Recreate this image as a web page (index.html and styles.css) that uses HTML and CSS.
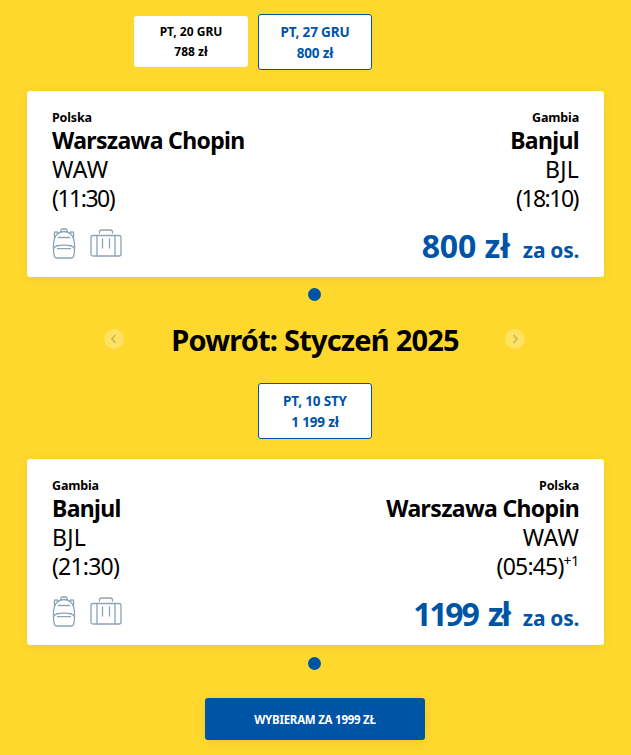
FILE: index.html
```html
<!DOCTYPE html>
<html lang="pl">

<head>
    <meta charset="utf-8">
    <title>Wybór lotu</title>
    <link rel="stylesheet" href="styles.css">
</head>

<body>
    <svg class="sprite" aria-hidden="true">
        <symbol id="backpack" viewBox="0 0 24 31">
            <path d="M9 3.500V2.400Q9 1 10.500 1h3Q15 1 15 2.400v1.100M5 6.200C7 4.300 9 3.500 12 3.500s5 .8 7 2.700c2 2 3.300 6 3.500 10.500.2 4.500-.1 8.500-.8 11.300Q21.200 30 19.500 30h-15Q2.800 30 2.300 28C1.600 25.200 1.300 21.200 1.500 16.700 1.700 12.200 3 8.200 5 6.200z" />
            <path d="M2.400 10V5Q2.400 4 3.500 4h1Q5.700 4 6.200 5M21.600 10V5Q21.600 4 20.500 4h-1Q18.300 4 17.800 5M6.500 9.500h11M1.500 20.500C3 17.500 6 17.200 12 17.200s9 .3 10.500 3.300M5.500 20.700h13" />
        </symbol>
        <symbol id="suitcase" viewBox="0 0 32 28">
            <rect x="1" y="6.500" width="30" height="20.500" rx="2" />
            <path d="M9.500 4V3Q9.500 1 11.500 1h9Q22.500 1 22.500 3v1M7 6.500V27M25 6.500V27M12.500 10v9M19.500 10v9" />
        </symbol>
    </svg>

    <div class="dates">
        <button class="date">
            <span class="day">PT, 20 GRU</span>
            <span class="amount">788 zł</span>
        </button>
        <button class="date active">
            <span class="day">PT, 27 GRU</span>
            <span class="amount">800 zł</span>
        </button>
    </div>

    <div class="flight">
        <div class="route">
            <div class="airport">
                <div class="country">Polska</div>
                <div class="city">Warszawa Chopin</div>
                <div class="code">WAW</div>
                <div class="time tight">(11:30)</div>
            </div>
            <div class="airport arrival">
                <div class="country">Gambia</div>
                <div class="city">Banjul</div>
                <div class="code">BJL</div>
                <div class="time tight">(18:10)</div>
            </div>
        </div>
        <div class="summary">
            <div class="luggage">
                <svg class="backpack"><use href="#backpack" /></svg>
                <svg class="suitcase"><use href="#suitcase" /></svg>
            </div>
            <div class="price">
                <span class="value">800 zł</span>
                <span class="person">za os.</span>
            </div>
        </div>
    </div>
    <div class="dot"></div>

    <div class="month">
        <button class="arrow"><svg viewBox="0 0 20 20"><path d="M11.500 6 8 10l3.500 4" /></svg></button>
        <h2>Powrót: Styczeń 2025</h2>
        <button class="arrow"><svg viewBox="0 0 20 20"><path d="M8.500 6 12 10l-3.500 4" /></svg></button>
    </div>

    <div class="dates dates-return">
        <button class="date active">
            <span class="day">PT, 10 STY</span>
            <span class="amount">1 199 zł</span>
        </button>
    </div>

    <div class="flight">
        <div class="route">
            <div class="airport">
                <div class="country">Gambia</div>
                <div class="city">Banjul</div>
                <div class="code">BJL</div>
                <div class="time">(21:30)</div>
            </div>
            <div class="airport arrival">
                <div class="country">Polska</div>
                <div class="city">Warszawa Chopin</div>
                <div class="code">WAW</div>
                <div class="time">(05:45)<sup>+1</sup></div>
            </div>
        </div>
        <div class="summary">
            <div class="luggage">
                <svg class="backpack"><use href="#backpack" /></svg>
                <svg class="suitcase"><use href="#suitcase" /></svg>
            </div>
            <div class="price">
                <span class="value tight">1199 zł</span>
                <span class="person">za os.</span>
            </div>
        </div>
    </div>
    <div class="dot"></div>

    <button class="choose">WYBIERAM ZA 1999 ZŁ</button>
</body>

</html>
```

FILE: styles.css
```css
* {
    box-sizing: border-box;
}

body {
    margin: 0;
    padding: 14px 27px 0;
    height: 755px;
    overflow: hidden;
    background-color: #ffd82e;
    color: #000;
    font-family: "Noto Sans", "Open Sans", sans-serif;
}

button {
    padding: 0;
    border: none;
    font-family: inherit;
    font-weight: bold;
    cursor: pointer;
}

.sprite {
    display: none;
}

.dates {
    display: flex;
    align-items: flex-start;
    gap: 10px;
    height: 56px;
    padding-left: 107px;
}

.dates-return {
    padding-left: 231px;
}

.date {
    display: flex;
    flex-direction: column;
    align-items: center;
    justify-content: center;
    width: 114px;
    height: 51px;
    margin-top: 2px;
    border-radius: 3px;
    background-color: white;
    color: #000;
    font-size: 12px;
    line-height: 20px;
    letter-spacing: 0;
}

.date.active {
    height: 56px;
    margin-top: 0;
    padding-top: 2px;
    border: 1px solid #0054a6;
    color: #0054a6;
    font-size: 13.500px;
    line-height: 21px;
    letter-spacing: -0.15px;
}

.flight {
    height: 186px;
    margin-top: 21px;
    padding: 19px 25px 0;
    border-radius: 3px;
    background-color: white;
    box-shadow: 0 2px 12px rgba(0, 0, 0, 0.06);
}

.dates-return + .flight {
    margin-top: 20px;
}

.route {
    display: flex;
    justify-content: space-between;
    height: 103px;
}

.arrival {
    text-align: right;
}

.country {
    font-size: 12.500px;
    font-weight: bold;
    line-height: 16px;
    letter-spacing: -0.15px;
}

.city,
.code,
.time {
    font-size: 23px;
    line-height: 29px;
}

.city {
    font-weight: bold;
    letter-spacing: -0.65px;
}

.code {
    letter-spacing: 0.2px;
}

.time {
    letter-spacing: -0.8px;
}

.time.tight {
    padding-right: 1px;
    letter-spacing: -1.500px;
}

.time sup {
    font-size: 14px;
    line-height: 0;
    letter-spacing: -0.3px;
}

.summary {
    display: flex;
    justify-content: space-between;
}

.luggage {
    display: flex;
    align-items: flex-start;
    gap: 14px;
    padding-top: 15px;
}

.luggage svg {
    fill: none;
    stroke: #8da3b6;
    stroke-width: 1.300;
    stroke-linecap: round;
    stroke-linejoin: round;
}

.backpack {
    width: 24px;
    height: 31px;
}

.suitcase {
    width: 32px;
    height: 28px;
    margin-top: 1px;
}

.price {
    display: flex;
    align-items: baseline;
    gap: 13px;
    color: #0054a6;
    font-weight: bold;
    line-height: 44px;
    padding-top: 11px;
}

.value {
    font-size: 32px;
    letter-spacing: -0.1px;
}

.value.tight {
    letter-spacing: -2.200px;
    word-spacing: 4px;
    margin-right: 1px;
}

.person {
    font-size: 21px;
    letter-spacing: -0.3px;
}

.dot {
    width: 13px;
    height: 13px;
    margin: 11px 0 0 281px;
    border-radius: 50%;
    background-color: #0054a6;
}

.month {
    display: flex;
    align-items: center;
    justify-content: space-between;
    width: 421px;
    height: 40px;
    margin: 18px 0 24px 77px;
}

.month h2 {
    margin: 0;
    padding: 1px 0 0 1px;
    font-size: 29px;
    line-height: 40px;
    letter-spacing: -0.8px;
    white-space: nowrap;
}

.arrow {
    width: 20px;
    height: 20px;
    border-radius: 50%;
    background-color: #ffe163;
}

.arrow svg {
    display: block;
    fill: none;
    stroke: #c9bc52;
    stroke-width: 1.800;
}

.flight + .dot:nth-last-child(2) {
    margin-top: 12px;
}

.choose {
    display: block;
    width: 220px;
    height: 42px;
    margin: 28px 0 0 178px;
    border-radius: 3px;
    background-color: #0054a6;
    box-shadow: 0 2px 10px rgba(0, 0, 0, 0.08);
    color: white;
    font-size: 11.500px;
    letter-spacing: -0.25px;
}
```
